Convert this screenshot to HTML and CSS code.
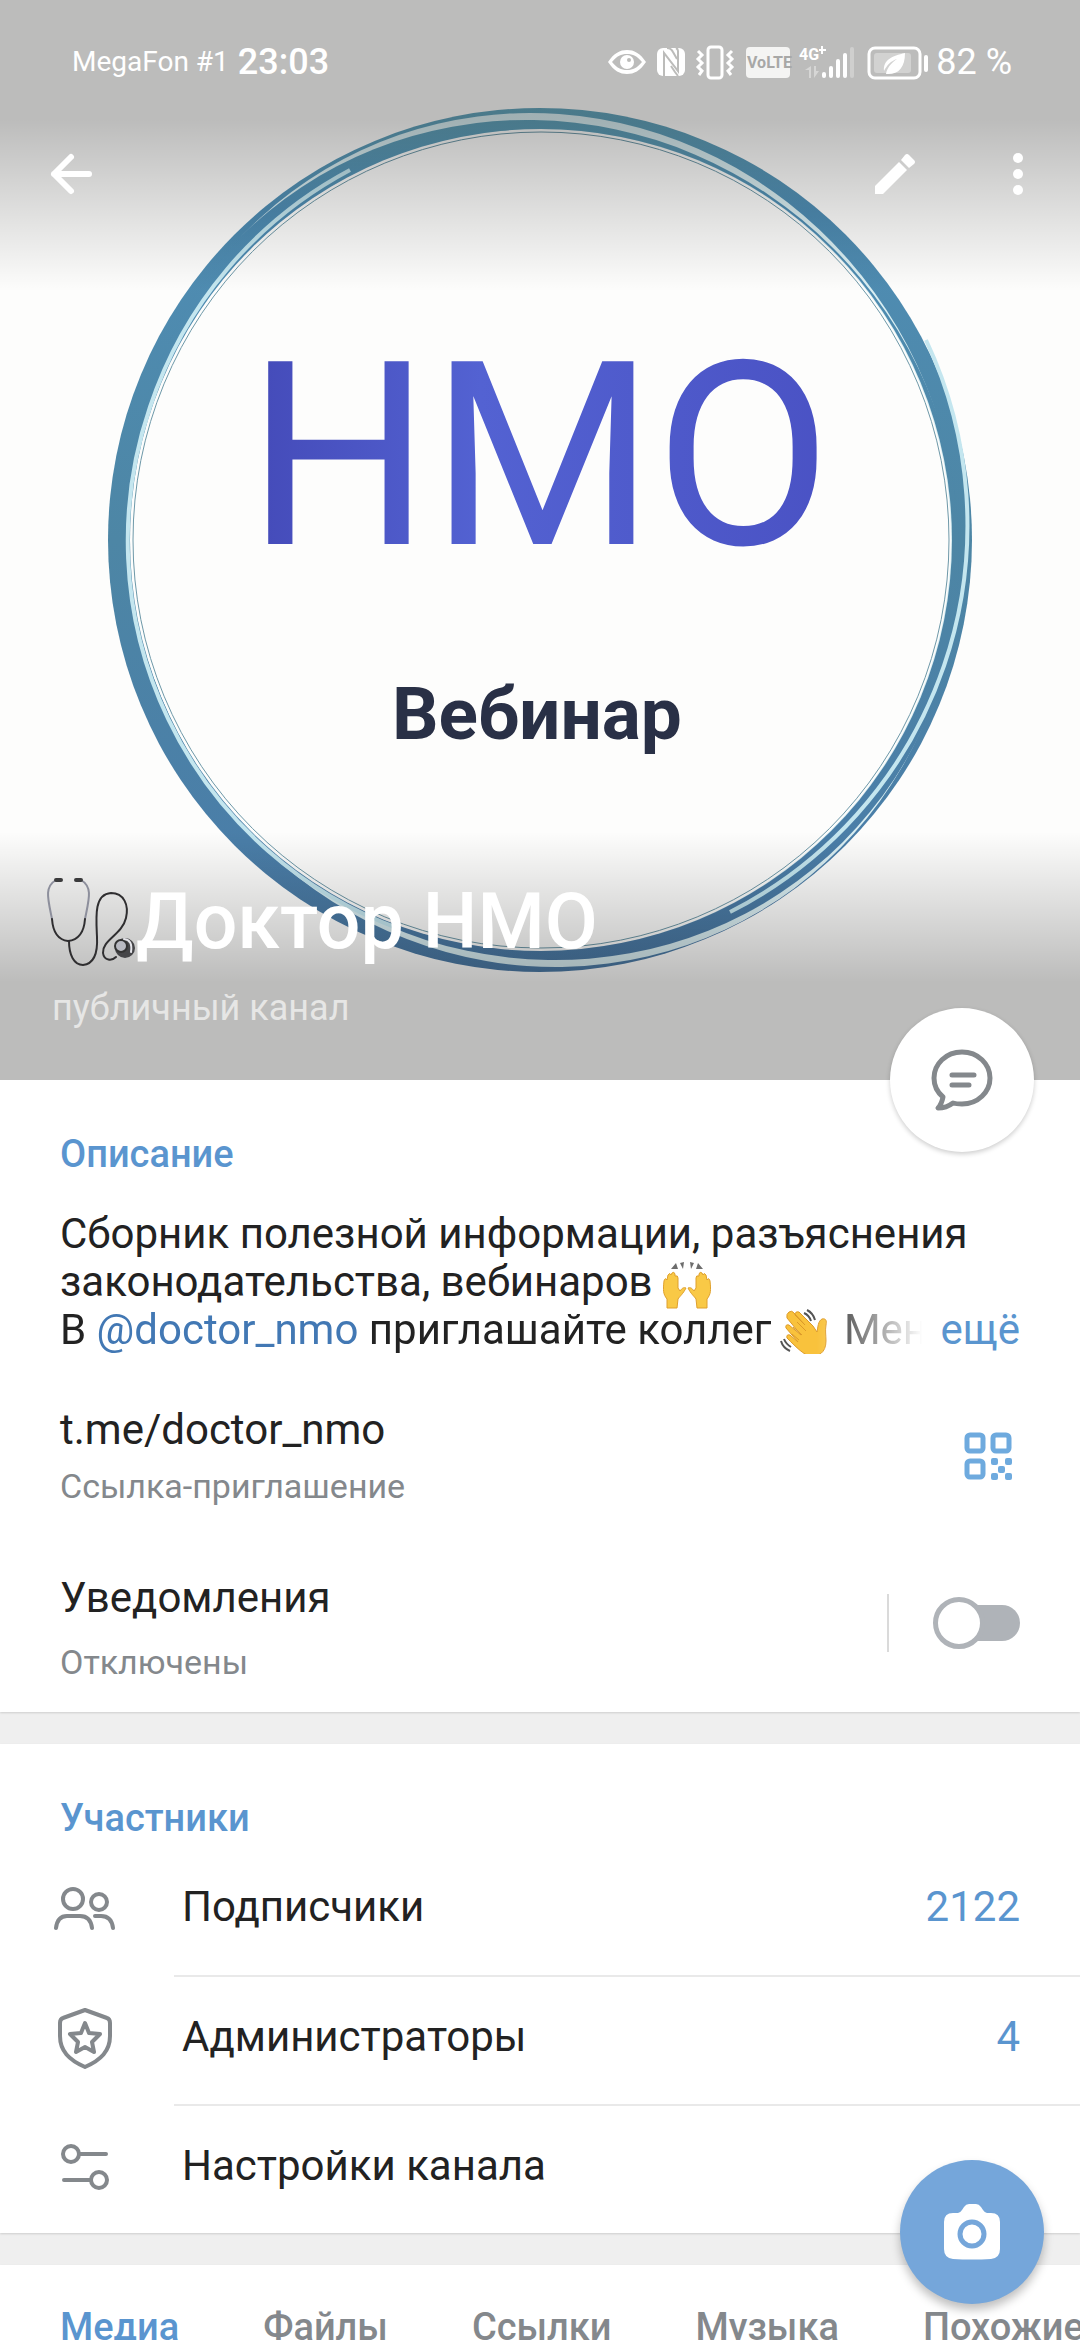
FILE: index.html
```html
<!DOCTYPE html>
<html lang="ru">
<head>
<meta charset="utf-8">
<meta name="viewport" content="width=device-width, initial-scale=1">
<title>Доктор НМО</title>
<link rel="stylesheet" href="styles.css">
</head>
<body>
<div class="screen">
  <header class="hero">
    <svg class="hero-photo" viewBox="0 0 1080 1080" role="img" aria-label="Логотип НМО Вебинар">
      <defs>
        <linearGradient id="ring" gradientUnits="userSpaceOnUse" x1="0" y1="108" x2="0" y2="972">
          <stop offset="0" stop-color="#65a5bb"/>
          <stop offset=".12" stop-color="#4f8db4"/>
          <stop offset=".5" stop-color="#4d86a5"/>
          <stop offset=".85" stop-color="#4a7ea8"/>
          <stop offset="1" stop-color="#4c7aa5"/>
        </linearGradient>
        <linearGradient id="ink" x1="0" y1="0" x2="1" y2="0">
          <stop offset="0" stop-color="#444ab8"/>
          <stop offset=".4" stop-color="#5362d2"/>
          <stop offset="1" stop-color="#4a52c4"/>
        </linearGradient>
        <mask id="outer-band">
          <circle cx="540" cy="540" r="432" fill="#fff"/>
          <ellipse cx="543" cy="540" rx="430" ry="413" transform="rotate(65 543 540)" fill="#000"/>
        </mask>
        <mask id="inner-band">
          <ellipse cx="541" cy="540" rx="427" ry="413" transform="rotate(45 541 540)" fill="#fff"/>
          <circle cx="541" cy="540" r="411" fill="#000"/>
        </mask>
      </defs>
      <rect width="1080" height="1080" fill="#fdfdfc"/>
      <circle cx="540" cy="540" r="421" fill="none" stroke="#d9eef2" stroke-width="20"/>
      <rect width="1080" height="1080" fill="url(#ring)" mask="url(#inner-band)"/>
      <rect width="1080" height="1080" fill="url(#ring)" mask="url(#outer-band)"/>
      <circle cx="541" cy="540" r="408" fill="none" stroke="#6d98a8" stroke-width="1"/>
      <g fill="none" stroke="#c4e6ef" stroke-width="4">
        <path d="M400 929A413 413 0 0 1 150 407A416 416 0 0 1 350 170"/>
        <path d="M926 340A434 434 0 0 1 730 912"/>
      </g>
      <text class="logo-big" x="247" y="544">НМО</text>
      <text class="logo-small" x="392" y="739">Вебинар</text>
    </svg>
    <div class="hero-shade"></div>
    <div class="hero-content">
      <div class="status">
        <span class="carrier">MegaFon #1</span>
        <span class="clock">23:03</span>
        <svg class="status-icons" viewBox="0 0 322 36" width="322" height="36" fill="#fff" aria-hidden="true">
          <path fill-rule="evenodd" d="M0 18C6 9 12 6 19 6s13 3 19 12c-6 9-12 12-19 12S6 27 0 18z M4 18c5 6 9 8 15 8s10-2 15-8c-5-6-9-8-15-8S9 12 4 18z"/>
          <circle cx="19" cy="18" r="7"/><circle cx="21" cy="16" r="2" fill="#bcbcba"/>
          <rect x="49" y="4" width="28" height="28" rx="6"/>
          <path d="M56 32V9l14 18V10" fill="none" stroke="#bcbcba" stroke-width="2"/>
          <path d="M59 4q4 0 6 4l4 7M70 27V7q0-2-2-3M63 22l4 6 3 4" fill="none" stroke="#bcbcba" stroke-width="2"/>
          <g fill="none" stroke="#fff" stroke-width="3">
            <rect x="100" y="3" width="14" height="31" rx="3"/>
            <path d="M90 7l4 4-4 4 4 4-4 4 4 4-3 4M124 7l-4 4 4 4-4 4 4 4-4 4 3 4"/>
          </g>
          <rect x="138" y="3" width="44" height="31" rx="4" fill="#f4f4f3"/>
          <text class="volte" x="139" y="24">VoLTE</text>
          <text class="net" x="191" y="16">4G</text>
          <path d="M211 6h7M214 2v8" stroke="#fff" stroke-width="2"/>
          <path d="M203 22v12h-2v-8h-4zM206 22v12l5-7h-3v-5z" fill="#d6d6d5"/>
          <rect x="214" y="28" width="4" height="6" rx="2"/><rect x="221" y="22" width="4" height="12" rx="2"/>
          <rect x="228" y="15" width="4" height="19" rx="2"/><rect x="235" y="9" width="4" height="25" rx="2"/>
          <rect x="242" y="3" width="4" height="31" rx="2" fill="#cfcfce"/>
          <rect x="261" y="4" width="51" height="30" rx="6" fill="none" stroke="#fff" stroke-width="3"/>
          <rect x="266" y="9" width="37" height="20" rx="3" fill="#d2d2d1"/>
          <path d="M297 9c-13 3-22 7-21 18 3-6 7-10 13-12-6 4-10 9-11 15 12 1 19-6 19-21z"/>
          <rect x="316" y="11" width="4" height="17" rx="2"/>
        </svg>
        <span class="battery">82 %</span>
      </div>
      <nav class="appbar" aria-label="Действия">
        <button class="icon-btn" aria-label="Назад">
          <svg viewBox="0 0 44 44" width="44" height="44" fill="none" stroke="#fff" stroke-width="6" stroke-linecap="round" stroke-linejoin="round"><path d="M40 22H5M22 5L5 22l17 17"/></svg>
        </button>
        <button class="icon-btn push" aria-label="Изменить">
          <svg viewBox="0 0 42 42" width="42" height="42" fill="#fff"><path d="M1 33v8h8L33 17l-8-8zM27 7l4-5q2-2 4 0l5 5q2 2 0 4l-5 4z"/></svg>
        </button>
        <button class="icon-btn" aria-label="Меню">
          <svg viewBox="0 0 12 44" width="12" height="44" fill="#fff"><circle cx="6" cy="6" r="5"/><circle cx="6" cy="22" r="5"/><circle cx="6" cy="38" r="5"/></svg>
        </button>
      </nav>
      <div class="identity">
        <h1 class="name">
          <svg class="steth" viewBox="0 0 90 90" width="90" height="90" fill="none" stroke-linecap="round" role="img" aria-label="стетоскоп">
            <path d="M10 3C-2 10 2 22 6 42M35 3c12 7 8 19 4 39" stroke="#8d8f9c" stroke-width="2"/>
            <path d="M6 42c1 14 7 21 16 22 10-1 16-8 17-22M23 64c0 14 5 24 14 24 9-1 15-9 14-28-1-20-3-43 14-44 13 0 18 12 15 25-4 17-24 22-23 35 1 8 9 8 13 4" stroke="#2f2e30" stroke-width="2"/>
            <path d="M10 3h5M30 3h5" stroke="#3b3b3c" stroke-width="4"/>
            <circle cx="79" cy="71" r="10" fill="#454548" stroke="none"/>
            <circle cx="75" cy="69" r="6" fill="#b9bac2" stroke="#333" stroke-width="2"/>
            <path d="M78 62q9 1 7 13" stroke="#e5e5ea" stroke-width="2"/>
          </svg>Доктор НМО</h1>
        <p class="kind">публичный канал</p>
      </div>
    </div>
    <button class="chat-btn" aria-label="Обсуждение">
      <svg viewBox="0 0 62 62" width="62" height="62" fill="none" stroke="#84888c" stroke-width="5" stroke-linecap="round" stroke-linejoin="round">
        <path d="M31 3C15 3 3 15 3 29c0 8 3 14 9 19-1 5-2 8-5 11 6 0 11-2 15-5 3 1 6 1 9 1 16 0 28-12 28-26S47 3 31 3z"/><path d="M21 26h22M21 36h17"/>
      </svg>
    </button>
  </header>

  <section class="card info">
    <h2 class="heading">Описание</h2>
    <div class="about">
      <p>Сборник полезной информации, разъяснения</p>
      <p>законодательства, вебинаров
        <svg class="emoji" viewBox="0 0 48 48" width="48" height="48" role="img" aria-label="руки вверх">
          <g fill="#6d6d6d"><path d="M8 8l5-6 2 6zM17 2l4-1-1 7zM27 1l4 1-3 6zM35 2l5 6-7 0z"/></g>
          <g fill="#f9c946" stroke="#dfa02c">
            <path d="M4 47V38C0 33 0 29 1 20q1-4 3-1l1-5q2-3 3 0l1-2q2-2 3 1v2q3-1 3 2v10l2 3c2-3 4-4 6-3-3 6-6 8-8 11l-1 9z"/>
            <path d="M44 47V38c4-5 4-9 3-18q-1-4-3-1l-1-5q-2-3-3 0l-1-2q-2-2-3 1v2q-3-1-3 2v10l-2 3c-2-3-4-4-6-3 3 6 6 8 8 11l1 9z"/>
          </g>
        </svg></p>
      <div class="last">
        <p class="fade">В <a class="mention" href="#doctor_nmo">@doctor_nmo</a> приглашайте коллег<svg class="emoji" viewBox="0 0 48 48" width="48" height="48" role="img" aria-label="машет рукой">
            <path d="M9 3q3-2 5 1l11 12L15 6q0-4 4-3l14 14 4 6c1-5 1-11 5-13 4-1 5 2 4 6-1 6 0 10 0 16 0 12-8 16-16 15C24 46 17 39 7 29q-1-4 3-3l8 7L6 19q-1-4 3-3l12 10L7 9q-1-4 2-6z" fill="#f9c23c" stroke="#dc9a2a"/>
            <path d="M26 22l-9-9M22 26l-9-8M19 31l-7-6" stroke="#dc9a2a" fill="none"/>
            <path d="M27 1q6 3 8 10M24 4q5 2 7 8M1 32q2 7 9 10M4 30q2 5 7 8" stroke="#555" stroke-width="2" fill="none"/>
          </svg> Меня</p>
        <button class="more">ещё</button>
      </div>
    </div>
    <div class="line">
      <div class="line-text">
        <a class="title" href="#link">t.me/doctor_nmo</a>
        <span class="sub">Ссылка-приглашение</span>
      </div>
      <button class="icon-btn" aria-label="QR-код">
        <svg viewBox="0 0 48 48" width="48" height="48" fill="none" stroke="#6eaade" stroke-width="5">
          <rect x="3" y="3" width="16" height="16" rx="3"/><rect x="29" y="3" width="16" height="16" rx="3"/><rect x="3" y="29" width="16" height="16" rx="3"/>
          <g fill="#6eaade" stroke="none"><rect x="27" y="26" width="7" height="7" rx="2"/><rect x="41" y="26" width="7" height="7" rx="2"/><rect x="34" y="34" width="7" height="7" rx="2"/><rect x="27" y="41" width="7" height="7" rx="2"/><rect x="41" y="41" width="7" height="7" rx="2"/></g>
        </svg>
      </button>
    </div>
    <div class="line notify">
      <label class="line-text" for="notify">
        <span class="title">Уведомления</span>
        <span class="sub">Отключены</span>
      </label>
      <div class="switch-box">
        <span class="rule"></span>
        <input class="toggle" type="checkbox" role="switch" id="notify">
      </div>
    </div>
  </section>

  <section class="card members">
    <h2 class="heading">Участники</h2>
    <ul class="rows">
      <li class="row">
        <svg viewBox="0 0 62 64" width="62" height="64" fill="none" stroke="#84888c" stroke-width="4" stroke-linecap="round">
          <circle cx="19" cy="20" r="10"/><circle cx="45" cy="23" r="8"/><path d="M2 49c1-8 5-12 11-12h13c7 0 11 4 12 12M41 37h6c7 0 11 4 12 12"/>
        </svg>
        <a class="row-body" href="#subs"><span>Подписчики</span><span class="count">2122</span></a>
      </li>
      <li class="row">
        <svg viewBox="0 0 62 64" width="62" height="64" fill="none" stroke="#84888c" stroke-width="4" stroke-linejoin="round">
          <path d="M31 2l22 8q3 1 3 5v13c0 15-9 24-25 31C15 52 6 43 6 28V15q0-4 3-5z"/><path d="M31 15l4 10 11 1-8 8 2 10-9-5-9 5 2-10-8-8 11-1z"/>
        </svg>
        <a class="row-body" href="#admins"><span>Администраторы</span><span class="count">4</span></a>
      </li>
      <li class="row">
        <svg viewBox="0 0 62 64" width="62" height="64" fill="none" stroke="#84888c" stroke-width="4" stroke-linecap="round">
          <circle cx="17" cy="17" r="8"/><path d="M26 17h26M10 43h26"/><circle cx="45" cy="43" r="8"/>
        </svg>
        <a class="row-body" href="#settings"><span>Настройки канала</span></a>
      </li>
    </ul>
  </section>

  <nav class="card tabs" aria-label="Вложения">
    <button class="tab active">Медиа</button>
    <button class="tab">Файлы</button>
    <button class="tab">Ссылки</button>
    <button class="tab">Музыка</button>
    <button class="tab">Похожие</button>
  </nav>

  <button class="fab" aria-label="Камера">
    <svg viewBox="0 0 58 56" width="58" height="56">
      <path d="M10 9h5q2 0 4-3l2-3q2-3 5-3h7q3 0 5 3l2 3q2 3 4 3h4q9 0 9 9v27q0 9-9 10-19 1-38 0-9-1-9-10V18q0-9 9-9z" fill="#fff"/>
      <circle cx="29" cy="30" r="12" fill="#fff" stroke="#75a6da" stroke-width="5"/>
    </svg>
  </button>
</div>
</body>
</html>
```

FILE: styles.css
```css
*, *::before, *::after { box-sizing: border-box; margin: 0; padding: 0; }

body {
  font-family: Roboto, "Noto Sans", sans-serif;
  font-size: 42px;
  line-height: 48px;
  color: #222;
  background: #efefef;
}

button { font: inherit; border: 0; background: none; cursor: pointer; }
a { color: inherit; text-decoration: none; }
svg { display: block; flex: none; }

.screen {
  display: flex;
  flex-direction: column;
  gap: 32px;
  height: 100vh;
  overflow: hidden;
}

/* Photo header */
.hero {
  position: relative;
  display: grid;
  flex: none;
  width: 100%;
  aspect-ratio: 1;
  margin-bottom: -32px;
  z-index: 1;
  color: #fff;
}
.hero-photo, .hero-shade, .hero-content { grid-area: 1 / 1; }
.hero-photo { width: 100%; height: 100%; }
.hero-shade {
  background:
    linear-gradient(rgba(0, 0, 0, .26) 11%, transparent 27%),
    linear-gradient(transparent 77%, rgba(0, 0, 0, .26) 91%);
}
.hero-content { display: flex; flex-direction: column; }
.logo-big { font-size: 257px; fill: url(#ink); }
.logo-small { font-size: 73px; font-weight: 700; fill: #293046; }

.status {
  display: flex;
  align-items: center;
  padding: 38px 68px 0 72px;
}
.carrier { font-size: 28px; }
.clock { font-size: 36px; font-weight: 500; margin-left: 9px; }
.battery { font-size: 36px; margin-left: 6px; }
.status-icons { margin-left: auto; }
.volte { font-size: 16px; font-weight: 700; fill: #a8a8a7; }
.net { font-size: 16px; font-weight: 700; }

.appbar {
  display: flex;
  align-items: center;
  gap: 96px;
  padding: 66px 56px 0 49px;
}
.icon-btn { display: grid; place-items: center; }
.push { margin-left: auto; }

.identity { margin-top: auto; padding: 0 46px 48px; }
.name {
  display: flex;
  align-items: center;
  font-size: 77px;
  font-weight: 500;
  line-height: 96px;
}
.kind {
  margin: 14px 0 0 6px;
  font-size: 36px;
  color: #e6e6e5;
}

.chat-btn, .fab {
  display: grid;
  place-items: center;
  width: 144px;
  height: 144px;
  border-radius: 50%;
}
.chat-btn {
  position: absolute;
  right: 46px;
  bottom: -72px;
  background: #fff;
  box-shadow: 0 2px 5px rgba(0, 0, 0, .2);
}
.fab {
  position: fixed;
  right: 36px;
  bottom: 36px;
  background: #75a6da;
  box-shadow: 0 6px 10px rgba(0, 0, 0, .25);
}

/* White blocks */
.card {
  flex: none;
  background: #fff;
  box-shadow: 0 1px 2px rgba(0, 0, 0, .14);
}
.heading {
  font-size: 38px;
  font-weight: 500;
  line-height: 48px;
  color: #5a95cf;
}

.info { padding: 50px 60px 30px; }
.about { padding: 32px 0 52px; white-space: nowrap; }
.emoji { display: inline-block; vertical-align: middle; margin: -4px 0; }
.last { display: flex; justify-content: space-between; }
.last .emoji { margin: -4px 6px -4px 8px; }
.fade {
  flex: 1;
  overflow: hidden;
  -webkit-mask-image: linear-gradient(90deg, #000 86%, transparent 98%);
  mask-image: linear-gradient(90deg, #000 86%, transparent 98%);
}
.mention { color: #4278b4; }
.more { color: #5a95cf; }

.line { display: flex; align-items: center; }
.line-text { display: flex; flex: 1; flex-direction: column; gap: 12px; }
.line .icon-btn { margin-right: 8px; }
.sub { font-size: 34px; line-height: 40px; color: #84888c; }
.notify { margin-top: 68px; }
.notify .line-text { gap: 20px; }
.switch-box { display: flex; align-items: center; padding-bottom: 10px; }
.rule { width: 2px; height: 58px; margin-right: 44px; background: #dadada; }

.toggle {
  appearance: none;
  display: grid;
  align-items: center;
  width: 87px;
  height: 52px;
}
.toggle::before, .toggle::after { content: ""; grid-area: 1 / 1; }
.toggle::before {
  width: 70px;
  height: 36px;
  margin-left: 17px;
  border-radius: 18px;
  background: #afb3b8;
}
.toggle::after {
  width: 52px;
  height: 52px;
  border: 5px solid #afb3b8;
  border-radius: 50%;
  background: #fff;
}

.members { padding-top: 50px; }
.members .heading { padding-left: 60px; }
.rows { list-style: none; padding-top: 4px; }
.row { display: flex; align-items: center; padding-left: 54px; gap: 58px; }
.row-body {
  display: flex;
  flex: 1;
  align-items: center;
  justify-content: space-between;
  height: 129px;
  padding: 0 60px 8px 8px;
}
.row + .row .row-body { border-top: 2px solid #e9e9e9; }
.count { color: #5a95cf; }

.tabs { display: flex; gap: 84px; padding: 38px 60px; overflow: hidden; }
.tab {
  flex: none;
  font-size: 38px;
  font-weight: 500;
  line-height: 48px;
  color: #84888c;
}
.active { color: #5a95cf; }
```
